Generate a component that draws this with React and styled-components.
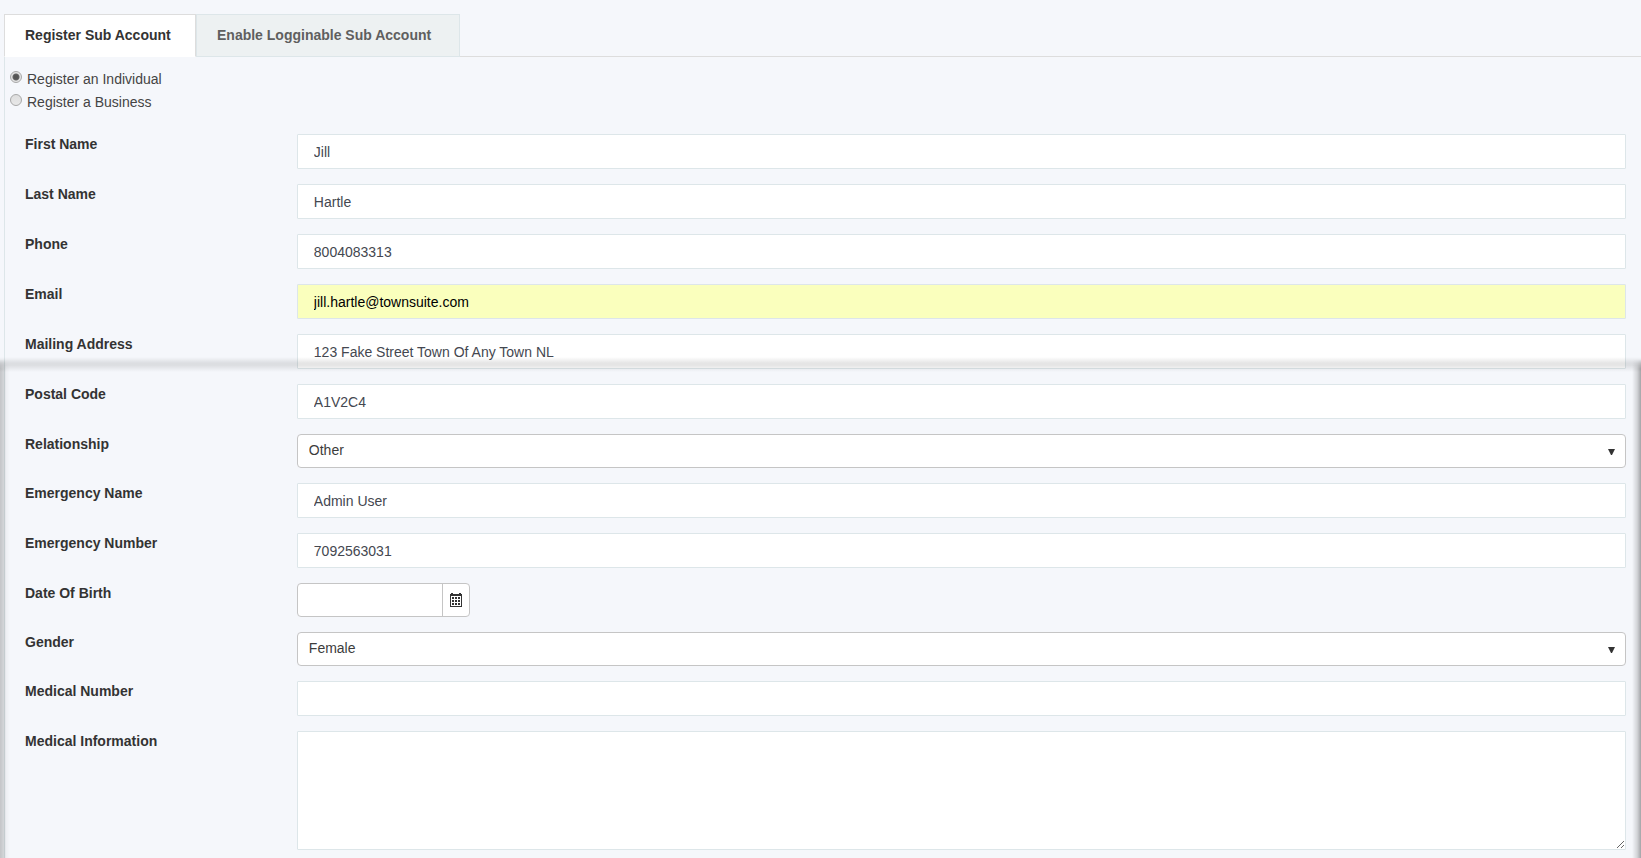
import React, { useState } from "react";
import styled, { createGlobalStyle, css } from "styled-components";

const GlobalStyle = createGlobalStyle`
  * {
    box-sizing: border-box;
  }

  body {
    margin: 0;
    background-color: #f5f7fb;
    color: #333;
    font-family: "Liberation Sans", Arial, sans-serif;
    font-size: 14px;
    line-height: 20px;
  }
`;

const Page = styled.main`
  position: relative;
  min-height: 100vh;
  padding: 14px 0 0 4px;
  overflow: hidden;
`;

const Tabs = styled.div`
  display: flex;
  border-bottom: 1px solid #ddd;
`;

const Tab = styled.button`
  min-width: ${({ $width }) => $width}px;
  height: 43px;
  margin-bottom: -1px;
  padding: 0 20px 2px;
  border: 1px solid #dde6e9;
  background-color: #edf1f2;
  color: #5f5f5f;
  font: bold 14px "Liberation Sans", Arial, sans-serif;
  text-align: left;
  cursor: pointer;

  ${({ $active }) =>
    $active &&
    css`
      border-color: #ddd;
      border-bottom-color: #fff;
      background-color: #fff;
      color: #333;
    `}
`;

const Panel = styled.section`
  padding: 11px 0 8px 5px;
  border-left: 1px solid #dde6e9;
`;

const AccountTypes = styled.div`
  display: flex;
  flex-direction: column;
  align-items: flex-start;
  margin-bottom: 20px;
`;

const RadioLabel = styled.label`
  display: flex;
  gap: 4px;
  color: #444;
  line-height: 23px;
`;

const Radio = styled.input`
  appearance: none;
  width: 12px;
  height: 12px;
  margin: 3px 1px 0 0;
  border: 1px solid #a8a8a8;
  border-radius: 50%;
  background: linear-gradient(#dedede, #e8e8e8);

  &:checked {
    background: radial-gradient(circle, #555 0 2px, #666 3px, #e4e4e4 4px);
  }
`;

const Form = styled.form`
  display: flex;
  flex-direction: column;
  gap: 15px;
`;

const Row = styled.div`
  display: grid;
  grid-template-columns: minmax(0, 1fr) minmax(0, 5fr);
  align-items: start;
`;

const Label = styled.label`
  padding: 0 0 0 15px;
  font-weight: bold;
`;

const Field = styled.div`
  display: flex;
  padding: 0 15px;
`;

const fieldText = css`
  color: #444750;
  font-family: inherit;
  font-size: 14px;
  outline: none;
`;

const TextInput = styled.input`
  ${fieldText}
  width: 100%;
  height: 35px;
  padding: 0 16px;
  border: 1px solid #dde6e9;
  border-radius: 1px;
  background-color: #fff;

  ${({ $filled }) =>
    $filled &&
    css`
      background-color: #faffbd;
      color: #000;
    `}
`;

const TextArea = styled.textarea`
  ${fieldText}
  width: 100%;
  height: 119px;
  padding: 6px 16px;
  border: 1px solid #dde6e9;
  border-radius: 1px;
  background-color: #fff;
  resize: vertical;
`;

const SelectBox = styled.div`
  position: relative;
  width: 100%;
`;

const Select = styled.select`
  ${fieldText}
  display: block;
  appearance: none;
  width: 100%;
  height: 34px;
  padding: 0 24px 2px 11px;
  border: 1px solid #c5c5c5;
  border-radius: 4px;
  background-color: #fff;
  color: #3c3c3c;
`;

const Arrow = styled.svg`
  position: absolute;
  top: 15px;
  right: 11px;
  pointer-events: none;
`;

const DateBox = styled.div`
  display: flex;
  width: 173px;
  height: 34px;
  border: 1px solid #c5c5c5;
  border-radius: 4px;
  background-color: #fff;
  overflow: hidden;
`;

const DateInput = styled.input`
  ${fieldText}
  flex: 1;
  min-width: 0;
  padding: 0 10px;
  border: none;
  background: none;
`;

const DateButton = styled.button`
  display: flex;
  align-items: center;
  justify-content: center;
  width: 27px;
  padding: 0;
  border: none;
  border-left: 1px solid #c5c5c5;
  background: none;
  cursor: pointer;
`;

// soft frame that lies over the lower part of the form
const Shade = styled.div`
  position: absolute;
  top: 357px;
  right: 0;
  bottom: 0;
  left: 0;
  pointer-events: none;

  &::before {
    content: "";
    position: absolute;
    inset: 0;
    background: linear-gradient(to right, #0003 0, #0002 4px, #00000008 6px, transparent 10px),
      linear-gradient(to left, #0005 0, #0002 4px, transparent 9px);
    mask-image: linear-gradient(transparent 2px, #000 12px);
  }

  &::after {
    content: "";
    position: absolute;
    top: 0;
    right: 0;
    left: 0;
    height: 15px;
    background: linear-gradient(transparent, #0000001a 40%, #0000001a 55%, transparent);
  }
`;

const fields = [
  { id: "firstName", label: "First Name", value: "Jill" },
  { id: "lastName", label: "Last Name", value: "Hartle" },
  { id: "phone", label: "Phone", value: "8004083313" },
  { id: "email", label: "Email", value: "jill.hartle@townsuite.com", filled: true },
  { id: "address", label: "Mailing Address", value: "123 Fake Street Town Of Any Town NL" },
  { id: "postalCode", label: "Postal Code", value: "A1V2C4" },
  {
    id: "relationship",
    label: "Relationship",
    type: "select",
    value: "Other",
    options: ["Other", "Parent", "Child", "Spouse"],
  },
  { id: "emergencyName", label: "Emergency Name", value: "Admin User" },
  { id: "emergencyNumber", label: "Emergency Number", value: "7092563031" },
  { id: "dob", label: "Date Of Birth", type: "date", value: "" },
  {
    id: "gender",
    label: "Gender",
    type: "select",
    value: "Female",
    options: ["Female", "Male"],
  },
  { id: "medicalNumber", label: "Medical Number", value: "" },
  { id: "medicalInfo", label: "Medical Information", type: "textarea", value: "" },
];

const CalendarIcon = () => (
  <svg width="12" height="14" viewBox="0 0 12 14" shapeRendering="crispEdges" aria-hidden="true">
    <path
      fill="#333"
      fillRule="evenodd"
      d="M0 1h1V0h2v1h6V0h2v1h1v13H0zM1 3v10h10V3z"
    />
    <path
      fill="#333"
      d="M2 4h2v2H2zM5 4h2v2H5zM8 4h2v2H8zM2 7h2v2H2zM5 7h2v2H5zM8 7h2v2H8zM2 10h2v2H2zM5 10h2v2H5zM8 10h2v2H8z"
    />
  </svg>
);

const Control = ({ field }) => {
  const { id, type, value, options, filled } = field;

  if (type === "select") {
    return (
      <SelectBox>
        <Select id={id} defaultValue={value}>
          {options.map((option) => (
            <option key={option}>{option}</option>
          ))}
        </Select>
        <Arrow width="7" height="6" viewBox="0 0 7 6" aria-hidden="true">
          <path d="M0 0h7L4 6H3z" fill="#333" />
        </Arrow>
      </SelectBox>
    );
  }

  if (type === "date") {
    return (
      <DateBox>
        <DateInput id={id} type="text" defaultValue={value} />
        <DateButton type="button" aria-label="Open calendar">
          <CalendarIcon />
        </DateButton>
      </DateBox>
    );
  }

  if (type === "textarea") {
    return <TextArea id={id} defaultValue={value} />;
  }

  return <TextInput id={id} type="text" defaultValue={value} $filled={filled} />;
};

const App = () => {
  const [tab, setTab] = useState("register");
  const [accountType, setAccountType] = useState("individual");

  return (
    <>
      <GlobalStyle />
      <Page>
        <Tabs role="tablist">
          <Tab
            role="tab"
            aria-selected={tab === "register"}
            $active={tab === "register"}
            $width={192}
            onClick={() => setTab("register")}
          >
            Register Sub Account
          </Tab>
          <Tab
            role="tab"
            aria-selected={tab === "enable"}
            $active={tab === "enable"}
            $width={264}
            onClick={() => setTab("enable")}
          >
            Enable Logginable Sub Account
          </Tab>
        </Tabs>
        <Panel>
          <AccountTypes>
            <RadioLabel>
              <Radio
                type="radio"
                name="accountType"
                checked={accountType === "individual"}
                onChange={() => setAccountType("individual")}
              />
              Register an Individual
            </RadioLabel>
            <RadioLabel>
              <Radio
                type="radio"
                name="accountType"
                checked={accountType === "business"}
                onChange={() => setAccountType("business")}
              />
              Register a Business
            </RadioLabel>
          </AccountTypes>
          <Form>
            {fields.map((field) => (
              <Row key={field.id}>
                <Label htmlFor={field.id}>{field.label}</Label>
                <Field>
                  <Control field={field} />
                </Field>
              </Row>
            ))}
          </Form>
        </Panel>
        <Shade />
      </Page>
    </>
  );
};

export default App;
